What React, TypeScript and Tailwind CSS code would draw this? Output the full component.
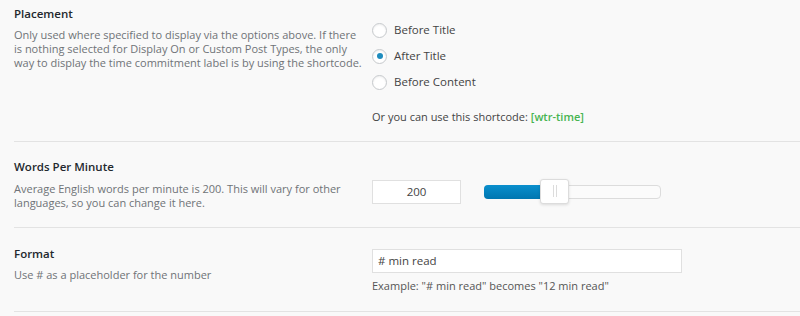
import { useState } from "react"

const font = { fontFamily: '"Open Sans", "Noto Sans", sans-serif' }

function Radio({ label, checked, onClick }: { label: string; checked: boolean; onClick: () => void }) {
  return (
    <button type="button" onClick={onClick} className="flex items-center h-[26px] text-left">
      <span className="w-[15px] h-[15px] rounded-full border border-[#c6c9cc] bg-white shadow-[inset_0_1px_2px_rgba(0,0,0,0.07)] flex items-center justify-center">
        {checked && <span className="w-[6px] h-[6px] rounded-full bg-[#1e8cbe]" />}
      </span>
      <span className="ml-[7px] text-[11.5px] text-[#444]">{label}</span>
    </button>
  )
}

export default function App() {
  const [placement, setPlacement] = useState("after")
  const [wpm, setWpm] = useState("200")
  const [format, setFormat] = useState("# min read")

  return (
    <div style={font} className="w-[800px] h-[316px] bg-[#f9f9f9] pl-[14px] overflow-hidden">
      {/* Placement */}
      <div className="flex border-b border-[#e3e3e3] pt-[5px] pb-[15px]">
        <div className="w-[358px] pr-[6px]">
          <div className="text-[11.5px] leading-[18px] font-semibold text-[#23282d]">Placement</div>
          <p className="mt-[5px] text-[11px] leading-[14px] text-[#6f7377]">
            Only used where specified to display via the options above. If there is nothing selected for Display On or Custom Post Types, the only way to display the time commitment label is by using the shortcode.
          </p>
        </div>
        <div className="mt-[12px]">
          <div className="flex flex-col">
            <Radio label="Before Title" checked={placement === "before"} onClick={() => setPlacement("before")} />
            <Radio label="After Title" checked={placement === "after"} onClick={() => setPlacement("after")} />
            <Radio label="Before Content" checked={placement === "content"} onClick={() => setPlacement("content")} />
          </div>
          <div className="mt-[13px] text-[11px] leading-[18px] text-[#444]">
            Or you can use this shortcode: <span className="text-[#46b450] font-semibold">[wtr-time]</span>
          </div>
        </div>
      </div>

      {/* Words Per Minute */}
      <div className="flex border-b border-[#e3e3e3] pt-[16px] pb-[17px]">
        <div className="w-[358px] pr-[6px]">
          <div className="text-[11.5px] leading-[18px] font-semibold text-[#23282d]">Words Per Minute</div>
          <p className="mt-[6px] text-[11px] leading-[14px] text-[#6f7377]">
            Average English words per minute is 200. This will vary for other languages, so you can change it here.
          </p>
        </div>
        <div className="mt-[15px] flex items-center">
          <input
            value={wpm}
            onChange={(e) => setWpm(e.target.value)}
            className="w-[89px] h-[24px] border border-[#e0e0e0] bg-white text-center text-[11.5px] text-[#444] outline-none"
          />
          <div className="ml-[23px] relative w-[177px] h-[14px] rounded-[4px] border border-[#dcdcdc] bg-[#fbfbfb]">
            <div className="absolute left-[-1px] top-[-1px] w-[64px] h-[14px] rounded-[4px] bg-gradient-to-b from-[#0a8fcd] to-[#0076b0]" />
            <div className="absolute left-[55px] top-[-7px] w-[29px] h-[25px] rounded-[3px] border border-[#dcdcdc] bg-white shadow-[0_1px_3px_rgba(0,0,0,0.12)] flex items-center justify-center gap-[2px]">
              <span className="w-px h-[12px] bg-[#dcdcdc]" />
              <span className="w-px h-[12px] bg-[#dcdcdc]" />
            </div>
          </div>
        </div>
      </div>

      {/* Format */}
      <div className="flex border-b border-[#e3e3e3] pt-[17px] pb-[17px]">
        <div className="w-[358px] pr-[6px]">
          <div className="text-[11.5px] leading-[18px] font-semibold text-[#23282d]">Format</div>
          <p className="mt-[5px] text-[11px] leading-[14px] text-[#6f7377]">Use # as a placeholder for the number</p>
        </div>
        <div className="mt-[2px]">
          <input
            value={format}
            onChange={(e) => setFormat(e.target.value)}
            className="w-[310px] h-[24px] border border-[#e0e0e0] bg-white px-[5px] text-[11.5px] text-[#444] outline-none"
          />
          <div className="mt-[5px] text-[11px] leading-[16px] text-[#555]">
            Example: "# min read" becomes "12 min read"
          </div>
        </div>
      </div>
    </div>
  )
}
